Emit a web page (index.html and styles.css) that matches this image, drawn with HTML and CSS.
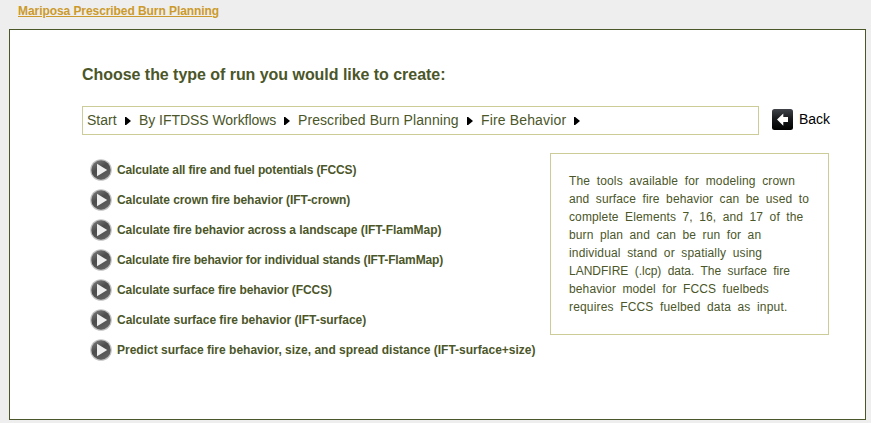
FILE: index.html
```html
<!DOCTYPE html>
<html lang="en">
<head>
<meta charset="utf-8">
<title>Mariposa Prescribed Burn Planning</title>
<link rel="stylesheet" href="styles.css">
</head>
<body>
<svg width="0" height="0" class="defs" aria-hidden="true">
  <defs>
    <linearGradient id="disc" x1="0" y1="0" x2="0.6" y2="1">
      <stop offset="0" stop-color="#858585"/><stop offset="0.5" stop-color="#4c4c4c"/><stop offset="1" stop-color="#606060"/>
    </linearGradient>
    <linearGradient id="key" x1="0" y1="0" x2="0" y2="1">
      <stop offset="0" stop-color="#40444a"/><stop offset="0.5" stop-color="#15171a"/><stop offset="1" stop-color="#000"/>
    </linearGradient>
    <symbol id="play" viewBox="0 0 22 22">
      <circle cx="11" cy="11" r="10.8" fill="#c0c0c0"/>
      <circle cx="11" cy="11" r="9.7" fill="url(#disc)"/>
      <path d="M7 4.8 17.2 11 7 17.2Z" fill="#eee"/>
    </symbol>
    <symbol id="caret" viewBox="0 0 6 8"><path d="M0 0h1.2L6 4 1.2 8H0Z" fill="#000"/></symbol>
  </defs>
</svg>
<a class="project" href="#">Mariposa Prescribed Burn Planning</a>
<main class="panel">
  <h1 class="title">Choose the type of run you would like to create:</h1>
  <div class="nav">
    <div class="crumbs">
      <span class="crumb c1">Start</span><svg class="caret"><use href="#caret"/></svg>
      <span class="crumb c2">By IFTDSS Workflows</span><svg class="caret"><use href="#caret"/></svg>
      <span class="crumb c3">Prescribed Burn Planning</span><svg class="caret"><use href="#caret"/></svg>
      <span class="crumb c4">Fire Behavior</span><svg class="caret"><use href="#caret"/></svg>
    </div>
    <a class="back" href="#">
      <svg class="back-icon" viewBox="0 0 21 21"><rect width="21" height="21" rx="2.5" fill="url(#key)"/><path d="M5 10.5 11.3 4.4V8H16v5h-4.7v3.8Z" fill="#fff"/></svg>
      <span class="back-label">Back</span>
    </a>
  </div>
  <div class="content">
    <ul class="runs">
      <li class="r1"><svg class="play"><use href="#play"/></svg><span>Calculate all fire and fuel potentials (FCCS)</span></li>
      <li class="r2"><svg class="play"><use href="#play"/></svg><span>Calculate crown fire behavior (IFT-crown)</span></li>
      <li class="r3"><svg class="play"><use href="#play"/></svg><span>Calculate fire behavior across a landscape (IFT-FlamMap)</span></li>
      <li class="r4"><svg class="play"><use href="#play"/></svg><span>Calculate fire behavior for individual stands (IFT-FlamMap)</span></li>
      <li class="r5"><svg class="play"><use href="#play"/></svg><span>Calculate surface fire behavior (FCCS)</span></li>
      <li class="r6"><svg class="play"><use href="#play"/></svg><span>Calculate surface fire behavior (IFT-surface)</span></li>
      <li class="r7"><svg class="play"><use href="#play"/></svg><span>Predict surface fire behavior, size, and spread distance (IFT-surface+size)</span></li>
    </ul>
    <p class="info"><span class="wide">The tools available for modeling crown</span><br><span class="mid">and surface fire behavior can be used to</span><br><span class="mid">complete Elements 7, 16, and 17 of the</span><br><span class="mid">burn plan and can be run for an</span><br><span class="wide">individual stand or spatially using</span><br>LANDFIRE (.lcp) data. The surface fire<br><span class="mid">behavior model for FCCS fuelbeds</span><br><span class="wide">requires FCCS fuelbed data as input.</span></p>
  </div>
</main>
</body>
</html>
```
FILE: styles.css
```css
* { box-sizing: border-box; }
body {
  margin: 0;
  height: 423px;
  overflow: hidden;
  background: #eee;
  color: #4b5629;
  font-family: "Liberation Sans", Arial, sans-serif;
}
.defs { position: absolute; }
.project {
  display: block;
  width: max-content;
  margin: 4px 0 0 18px;
  font-size: 12px;
  font-weight: bold;
  line-height: 14px;
  letter-spacing: -0.07px;
  color: #cc9a2c;
}
.panel {
  width: 857px;
  height: 391px;
  margin: 11px 0 0 9px;
  padding: 35px 36px 0 72px;
  background: #fff;
  border: 1px solid #4b5629;
}
.title {
  margin: 0;
  font-size: 16px;
  line-height: 20px;
  letter-spacing: -0.04px;
  white-space: nowrap;
}
.nav {
  display: flex;
  align-items: center;
  margin-top: 21px;
}
.crumbs {
  display: flex;
  flex: none;
  align-items: center;
  width: 677px;
  height: 29px;
  padding: 0 0 2px 4px;
  border: 1px solid #cccc99;
  font-size: 14px;
  line-height: 16px;
  white-space: nowrap;
}
.caret { width: 6px; height: 8px; margin: 3px 8px 0; flex: none; }
.c1 { width: 30px; }
.c2 { width: 137px; letter-spacing: -0.05px; }
.c3 { width: 161px; letter-spacing: 0.08px; }
.c4 { width: 85px; letter-spacing: 0.15px; }
.back {
  display: flex;
  flex: none;
  align-items: center;
  gap: 6px;
  margin: -2px 0 0 13px;
  font-size: 14px;
  line-height: 16px;
  color: #000;
  text-decoration: none;
}
.back-icon { width: 21px; height: 21px; }
.back-label { padding-bottom: 2px; }
.content {
  display: flex;
  align-items: flex-start;
  justify-content: space-between;
  margin-top: 18px;
}
.runs {
  margin: 2px 0 0 8px;
  padding: 0;
  list-style: none;
  font-size: 12px;
  font-weight: bold;
  white-space: nowrap;
}
.runs li {
  display: flex;
  align-items: center;
  gap: 5px;
  height: 30px;
}
.r1, .r4 { letter-spacing: -0.135px; }
.r2, .r3 { letter-spacing: -0.055px; }
.r5 { letter-spacing: -0.1px; }
.r6 { letter-spacing: -0.02px; }
.play { width: 22px; height: 22px; }
.info {
  flex: none;
  width: 279px;
  height: 182px;
  margin: 0;
  padding: 18px 0 0 18px;
  border: 1px solid #cccc99;
  font-size: 12px;
  line-height: 18px;
  word-spacing: 3px;
  white-space: nowrap;
}
.mid { letter-spacing: 0.12px; }
.wide { letter-spacing: 0.165px; }
```
